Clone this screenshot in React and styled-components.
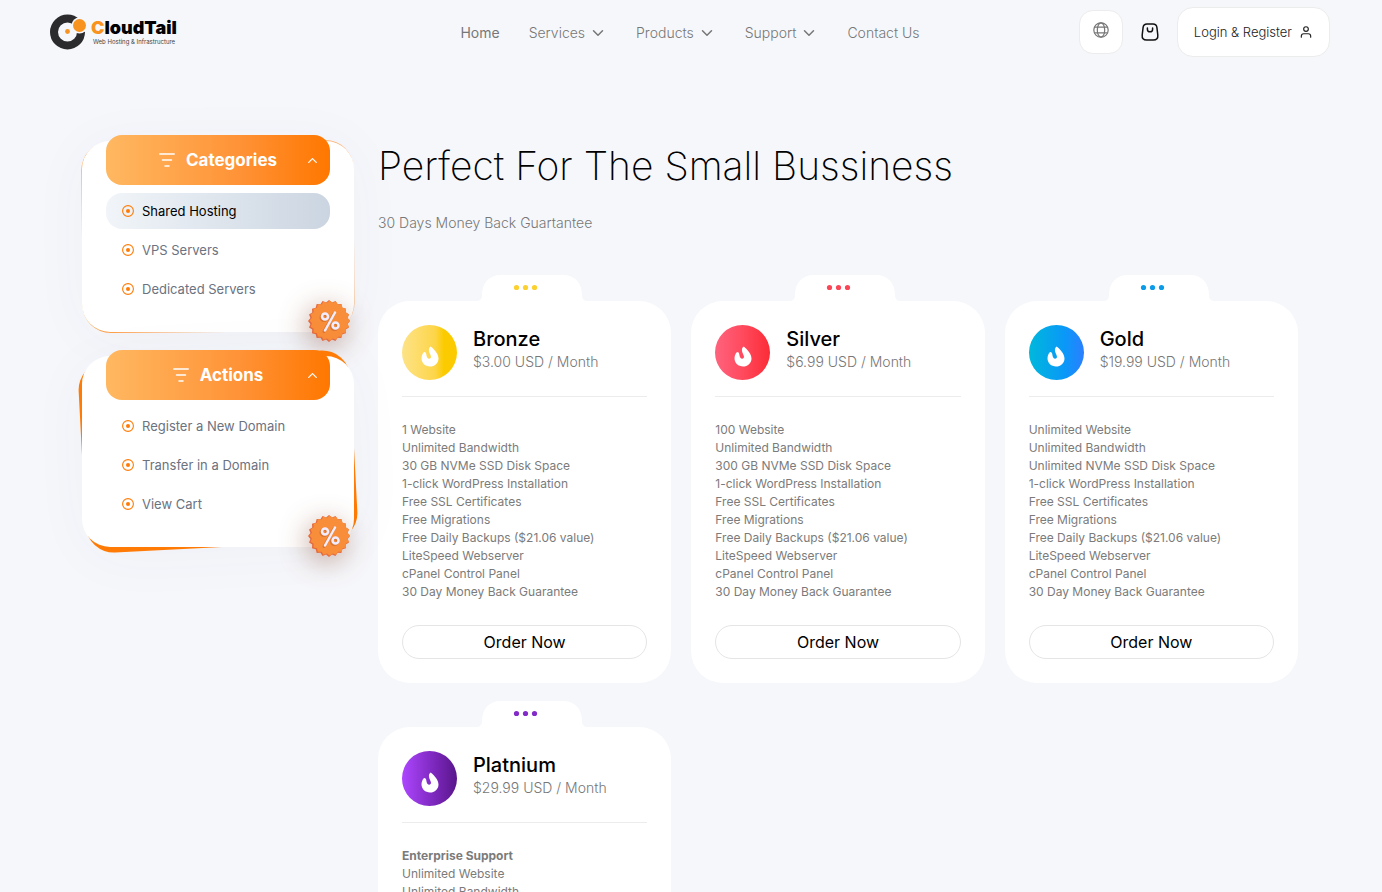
import React from 'react';
import styled, { createGlobalStyle } from 'styled-components';
import { FiChevronDown, FiChevronUp, FiUser } from 'react-icons/fi';

const GlobalStyle = createGlobalStyle`
    * {
        box-sizing: border-box;
    }
    html {
        scrollbar-width: none;
    }
    body {
        margin: 0;
        background: #f6f7fb;
        color: #000;
        font-family: Inter, "Open Sans", sans-serif;
        font-size: 14px;
    }
    h1, h2, p, ul {
        margin: 0;
        padding: 0;
    }
    ul {
        list-style: none;
    }
    a {
        color: inherit;
        text-decoration: none;
    }
    button {
        margin: 0;
        font-family: inherit;
        cursor: pointer;
    }
    svg {
        flex-shrink: 0;
    }
`;

const Page = styled.div`
    padding: 0 52px 40px 50px;
`;

const Header = styled.header`
    max-width: 1280px;
    height: 64px;
    margin: 0 auto;
    display: grid;
    grid-template-columns: 1fr auto 1fr;
    align-items: center;
`;

const Logo = styled.a`
    display: flex;
    align-items: center;
    gap: 4px;
`;

const LogoName = styled.span`
    display: block;
    font-size: 18px;
    font-weight: 900;
    line-height: 18px;

    b {
        color: #f7931e;
        font-weight: 900;
    }
`;

const LogoTagline = styled.span`
    display: block;
    padding-left: 2px;
    font-size: 6px;
    line-height: 9px;
    color: #444;
`;

const Nav = styled.nav`
    display: flex;
    align-items: center;
    gap: 29px;
    padding-top: 2px;
`;

const NavLink = styled.a`
    display: flex;
    align-items: center;
    gap: 4px;
    font-size: 14px;
    font-weight: ${({ $active }) => ($active ? 400 : 300)};
    line-height: 20px;
    color: #777;
`;

const HeaderTools = styled.div`
    display: flex;
    align-items: center;
    justify-content: flex-end;
    gap: 18px;
`;

const IconButton = styled.button`
    width: 44px;
    height: 44px;
    display: grid;
    place-items: center;
    padding: 0 0 4px;
    background: #fff;
    border: 1px solid #ececec;
    border-radius: 14px;
`;

const CartLink = styled.a`
    display: flex;
`;

const LoginLink = styled.a`
    height: 50px;
    display: flex;
    align-items: center;
    gap: 7px;
    padding: 0 16px;
    background: #fff;
    border: 1px solid #ececec;
    border-radius: 16px;
    font-size: 13px;
    font-weight: 300;
    color: #222;
`;

const Layout = styled.div`
    max-width: 1280px;
    margin: 0 auto;
    padding: 71px 32px 0;
    display: grid;
    grid-template-columns: 272px 1fr;
    gap: 24px;
    align-items: start;
`;

const Sidebar = styled.aside`
    display: grid;
    gap: 24px;
    padding-top: 6px;
`;

const Panel = styled.section`
    position: relative;
    z-index: 0;
    padding: 0 24px 25px;

    &::before,
    &::after {
        content: "";
        position: absolute;
        inset: 0;
        border-radius: 28px;
    }
    &::before {
        z-index: -2;
        background: ${({ $strong }) => ($strong ? '#ff7b06' : 'linear-gradient(100deg, #ff9a3c, #f9b983)')};
        transform: rotate(${({ $strong }) => ($strong ? '-3deg' : '-0.5deg')});
        box-shadow: 0 4px 60px rgba(60, 70, 90, 0.04);
    }
    &::after {
        z-index: -1;
        background: #fff;
    }
`;

const PanelHeader = styled.button`
    width: 100%;
    height: 50px;
    margin-top: -6px;
    display: grid;
    grid-template-columns: 1fr auto 1fr;
    align-items: center;
    padding: 0 10px;
    border: 0;
    border-radius: 16px;
    background: linear-gradient(90deg, #ffb861, #ff9236 60%, #ff7700);
    color: #fff;

    > svg {
        justify-self: end;
    }
`;

const PanelTitle = styled.span`
    grid-column: 2;
    display: flex;
    align-items: center;
    gap: 11px;
    font-size: 17px;
    font-weight: 700;
    line-height: 24px;
`;

const PanelList = styled.ul`
    display: grid;
    gap: 3px;
    margin-top: 8px;
`;

const PanelLink = styled.a`
    height: 36px;
    display: flex;
    align-items: center;
    gap: 8px;
    padding: 0 16px;
    border-radius: 16px;
    font-size: 13px;
    color: ${({ $active }) => ($active ? '#000' : '#6b7280')};
    background: ${({ $active }) => ($active ? 'linear-gradient(90deg, #f1f5f9, #cbd5e1)' : 'none')};
`;

const Discount = styled.svg`
    position: absolute;
    right: 4px;
    bottom: -10px;
    filter: drop-shadow(-3px 6px 14px rgba(120, 50, 20, 0.4));
`;

const Title = styled.h1`
    margin-top: 7px;
    font-size: 39px;
    font-weight: 200;
    line-height: 48px;
`;

const Subtitle = styled.p`
    margin-top: 22px;
    font-size: 14px;
    font-weight: 300;
    line-height: 22px;
    color: #777;
`;

const Plans = styled.div`
    display: grid;
    grid-template-columns: repeat(3, 1fr);
    gap: 18px 20px;
    margin-top: 41px;
`;

const Tab = styled.svg`
    display: block;
    margin-left: 98px;
`;

const PlanBody = styled.div`
    padding: 24px;
    background: #fff;
    border-radius: 32px;
`;

const PlanHead = styled.div`
    display: flex;
    align-items: flex-start;
    gap: 16px;
    padding-bottom: 16px;
    border-bottom: 1px solid #ececec;
`;

const PlanIcon = styled.span`
    width: 55px;
    height: 55px;
    display: grid;
    place-items: center;
    padding-top: 7px;
    border-radius: 50%;
    background: linear-gradient(90deg, ${({ $colors }) => $colors});
`;

const PlanName = styled.h2`
    padding-top: 2px;
    font-size: 20px;
    font-weight: 500;
    line-height: 24px;
`;

const Price = styled.p`
    font-size: 14px;
    font-weight: 300;
    line-height: 22px;
    color: #777;
`;

const Features = styled.ul`
    margin: 24px 0;
    font-size: 12px;
    line-height: 18px;
    color: #7b7b7b;
`;

const Feature = styled.li`
    font-weight: ${({ $bold }) => ($bold ? 700 : 400)};
`;

const OrderButton = styled.button`
    width: 100%;
    height: 34px;
    padding: 0;
    border: 1px solid #e5e5e5;
    border-radius: 17px;
    background: #fff;
    color: #000;
    font-size: 16px;
`;

const navItems = [
    { label: 'Home', active: true },
    { label: 'Services', menu: true },
    { label: 'Products', menu: true },
    { label: 'Support', menu: true },
    { label: 'Contact Us' },
];

const panels = [
    { title: 'Categories', items: ['Shared Hosting', 'VPS Servers', 'Dedicated Servers'], active: 'Shared Hosting' },
    { title: 'Actions', items: ['Register a New Domain', 'Transfer in a Domain', 'View Cart'], strong: true },
];

const commonFeatures = [
    '1-click WordPress Installation',
    'Free SSL Certificates',
    'Free Migrations',
    'Free Daily Backups ($21.06 value)',
    'LiteSpeed Webserver',
    'cPanel Control Panel',
    '30 Day Money Back Guarantee',
];

const plans = [
    {
        name: 'Bronze',
        price: '$3.00',
        colors: '#fde387, #fdd54a 60%, #fbcb00 76%, #fbcb00',
        dot: '#fcd02f',
        features: ['1 Website', 'Unlimited Bandwidth', '30 GB NVMe SSD Disk Space'],
    },
    {
        name: 'Silver',
        price: '$6.99',
        colors: '#ff637e, #ff4a5e 50%, #fb2c36',
        dot: '#fb4658',
        features: ['100 Website', 'Unlimited Bandwidth', '300 GB NVMe SSD Disk Space'],
    },
    {
        name: 'Gold',
        price: '$19.99',
        colors: '#00b8db, #0a98f8 65%, #2b7fff',
        dot: '#0b9be8',
        features: ['Unlimited Website', 'Unlimited Bandwidth', 'Unlimited NVMe SSD Disk Space'],
    },
    {
        name: 'Platnium',
        price: '$29.99',
        colors: '#ad46ff, #7b27bb 60%, #59168b',
        dot: '#822bc8',
        support: 'Enterprise Support',
        features: ['Unlimited Website', 'Unlimited Bandwidth', 'Unlimited NVMe SSD Disk Space'],
    },
];

const LogoMark = () => (
    <svg width="37" height="36" viewBox="0 0 37 36" aria-hidden="true">
        <circle cx="17.5" cy="18" r="13.5" fill="none" stroke="#2b2b2d" strokeWidth="8" />
        <circle cx="29.5" cy="11.5" r="8" fill="#f6f7fb" />
        <circle cx="29.5" cy="11.5" r="6.5" fill="#f7931e" />
        <circle cx="17.5" cy="17.5" r="2.4" fill="#f7931e" />
    </svg>
);

const GlobeIcon = () => (
    <svg width="16" height="16" viewBox="0 0 16 16" fill="none" stroke="#777" strokeWidth="1.2" aria-hidden="true">
        <circle cx="8" cy="8" r="7.2" />
        <ellipse cx="8" cy="8" rx="3.7" ry="7.2" />
        <path d="M1.5 5.2h13M1.5 10.8h13" />
    </svg>
);

const BagIcon = () => (
    <svg width="18" height="18" viewBox="0 0 18 18" fill="none" stroke="#111" strokeWidth="1.5" strokeLinecap="round" aria-hidden="true">
        <path d="M6 .9h6c2.400 0 3.600 1.300 3.900 3.500l.9 7.600c.3 3.300-1.100 5.100-4.500 5.100H5.700c-3.400 0-4.800-1.800-4.500-5.100l.9-7.600C2.400 2.200 3.600.9 6 .9Z" />
        <path d="M6.400 5v1.200c0 3.500 5.200 3.500 5.200 0V5" />
    </svg>
);

const FilterIcon = () => (
    <svg width="16" height="14" viewBox="0 0 16 14" stroke="#fff" strokeWidth="1.5" strokeLinecap="round" aria-hidden="true">
        <path d="M.8 1h14.4M3.500 7h9M6 13h4" />
    </svg>
);

const TargetIcon = () => (
    <svg width="12" height="12" viewBox="0 0 12 12" aria-hidden="true">
        <circle cx="6" cy="6" r="5.4" fill="none" stroke="#ff7b06" strokeWidth="1.1" />
        <circle cx="6" cy="6" r="2" fill="#ff7b06" />
    </svg>
);

const FlameIcon = () => (
    <svg width="18" height="21" viewBox="0 0 18 21" fill="#fff" aria-hidden="true">
        <path d="M9.6.4C13 2.8 17.500 7.800 17.500 12.400c0 4.600-3.800 8.200-8.500 8.200S.5 17 .5 12.600c0-2.400.8-4.600 2-6 .6-.7 1.700-.7 2.200.1.700 1 .7 2.400 1 3.600.3 1.400 1.300 2.400 2.400 2.400 1.300 0 2.100-1 1.800-2.400-.5-2-2-3.800-2-6.200C7.900 2.500 8.500 1.100 9.600.4Z" />
    </svg>
);

// Outline of the scalloped seal, alternating between the outer and inner radius
const sealPoints = Array.from({ length: 40 }, (_, i) => {
    const radius = i % 2 ? 18.8 : 21;
    const angle = (i * Math.PI) / 20;
    return `${(21 + radius * Math.cos(angle)).toFixed(2)},${(21 + radius * Math.sin(angle)).toFixed(2)}`;
}).join(' ');

const DiscountBadge = () => (
    <Discount width="42" height="42" viewBox="0 0 42 42" aria-hidden="true">
        <polygon points={sealPoints} fill="#e46a3e" strokeLinejoin="round" />
        <polygon points={sealPoints} fill="#f88d3a" transform="translate(1.6 .4) scale(.96)" />
        <g fill="none" stroke="#b85a28" strokeOpacity=".45" strokeWidth="3" strokeLinecap="round" transform="translate(-1 1)">
            <path d="M27 12.5 17 30.5" />
            <circle cx="17" cy="16.5" r="3" />
            <circle cx="27.5" cy="25.5" r="3" />
        </g>
        <g fill="none" stroke="#f1edff" strokeWidth="2.5" strokeLinecap="round">
            <path d="M27 12.5 17 30.5" />
            <circle cx="17" cy="16.5" r="3" />
            <circle cx="27.5" cy="25.5" r="3" />
        </g>
    </Discount>
);

const SidePanel = ({ title, items, active, strong }) => (
    <Panel $strong={strong}>
        <PanelHeader type="button" aria-expanded="true">
            <PanelTitle>
                <FilterIcon />
                {title}
            </PanelTitle>
            <FiChevronUp size={15} />
        </PanelHeader>
        <PanelList>
            {items.map((item) => (
                <li key={item}>
                    <PanelLink href="#" $active={item === active}>
                        <TargetIcon />
                        {item}
                    </PanelLink>
                </li>
            ))}
        </PanelList>
        <DiscountBadge />
    </Panel>
);

const Plan = ({ name, price, colors, dot, support, features }) => (
    <article>
        <Tab width="112" height="26" viewBox="0 0 112 26" aria-hidden="true">
            <path d="M0 26C4 26 6 24 6 20C6 8 13 0 25 0H87C99 0 106 8 106 20C106 24 108 26 112 26Z" fill="#fff" />
            {[40.5, 49.5, 58.5].map((cx) => (
                <circle key={cx} cx={cx} cy="12.5" r="2.6" fill={dot} />
            ))}
        </Tab>
        <PlanBody>
            <PlanHead>
                <PlanIcon $colors={colors}>
                    <FlameIcon />
                </PlanIcon>
                <div>
                    <PlanName>{name}</PlanName>
                    <Price>{price} USD / Month</Price>
                </div>
            </PlanHead>
            <Features>
                {support && <Feature $bold>{support}</Feature>}
                {[...features, ...commonFeatures].map((feature) => (
                    <Feature key={feature}>{feature}</Feature>
                ))}
            </Features>
            <OrderButton type="button">Order Now</OrderButton>
        </PlanBody>
    </article>
);

const App = () => {
    return (
        <Page>
            <GlobalStyle />
            <Header>
                <Logo href="#">
                    <LogoMark />
                    <span>
                        <LogoName><b>C</b>loudTail</LogoName>
                        <LogoTagline>Web Hosting &amp; Infrastructure</LogoTagline>
                    </span>
                </Logo>
                <Nav>
                    {navItems.map(({ label, active, menu }) => (
                        <NavLink key={label} href="#" $active={active}>
                            {label}
                            {menu && <FiChevronDown size={18} />}
                        </NavLink>
                    ))}
                </Nav>
                <HeaderTools>
                    <IconButton type="button" aria-label="Language">
                        <GlobeIcon />
                    </IconButton>
                    <CartLink href="#" aria-label="Cart">
                        <BagIcon />
                    </CartLink>
                    <LoginLink href="#">
                        Login &amp; Register
                        <FiUser size={14} />
                    </LoginLink>
                </HeaderTools>
            </Header>
            <Layout>
                <Sidebar>
                    {panels.map((panel) => (
                        <SidePanel key={panel.title} {...panel} />
                    ))}
                </Sidebar>
                <main>
                    <Title>Perfect For The Small Bussiness</Title>
                    <Subtitle>30 Days Money Back Guartantee</Subtitle>
                    <Plans>
                        {plans.map((plan) => (
                            <Plan key={plan.name} {...plan} />
                        ))}
                    </Plans>
                </main>
            </Layout>
        </Page>
    );
};

export default App;
